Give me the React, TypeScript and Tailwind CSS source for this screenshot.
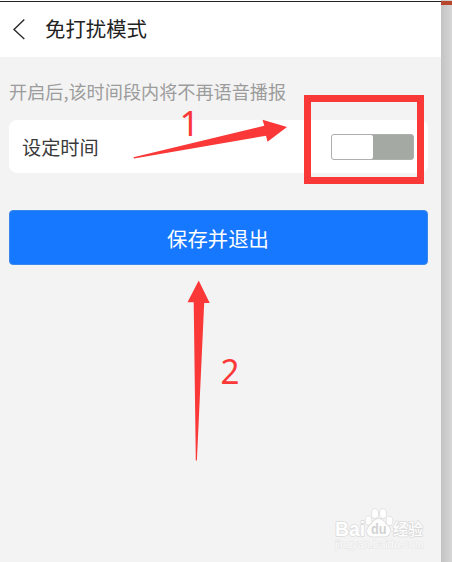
import { useState } from 'react';

const Header = () => (
    <header className="flex h-[55px] items-center bg-white pb-[1px] pl-[12px]">
        <svg width="14" height="22" viewBox="0 0 14 22" fill="none" stroke="#2a2a2a" strokeWidth="1.4">
            <path d="M12.3 1.5 L2 11.5 L12.3 21" />
        </svg>
        <h1 className="-mt-[2px] ml-[19px] text-[20.4px] leading-[28px] text-[#222]">免打扰模式</h1>
    </header>
);

type SwitchProps = {
    on: boolean;
    onToggle: () => void;
};

const Switch = ({ on, onToggle }: SwitchProps) => (
    <button
        type="button"
        role="switch"
        aria-checked={on}
        onClick={onToggle}
        className={`mt-[1px] flex h-[26px] w-[83px] rounded-[3px] border border-[#adb0ac] bg-[#a4aaa3] ${on ? 'justify-end' : 'justify-start'}`}
    >
        <span className="h-full w-[41px] rounded-[2px] bg-white"></span>
    </button>
);

// red marks drawn over the page
const Annotations = () => (
    <svg
        className="pointer-events-none absolute top-0 left-0"
        width="452"
        height="562"
        viewBox="0 0 452 562"
        fill="#fb3838"
        fontFamily="'Noto Sans', 'Open Sans', sans-serif"
    >
        <rect x="307.5" y="98.5" width="113" height="82" fill="none" stroke="#fb3838" strokeWidth="7" />
        <path d="M133.5 157.2 L264.3 125.8 L262.5 119.8 L287 127 L267.5 141.7 L266 135.7 L134 158.4 Z" />
        <path d="M198.7 280.5 L209.7 303 L204.2 303 L196.9 460.5 L195.8 460.5 L193.7 302.3 L187.5 302.3 Z" />
        <text x="179.5" y="136" fontSize="35">1</text>
        <text x="220.5" y="383.5" fontSize="35" textLength="19" lengthAdjust="spacingAndGlyphs">2</text>
    </svg>
);

const Watermark = () => (
    <svg
        className="pointer-events-none absolute top-[504px] left-[332px]"
        width="98"
        height="50"
        viewBox="0 0 98 50"
        fill="#fefefe"
        stroke="#dadada"
        strokeWidth="1.5"
        strokeLinejoin="round"
        paintOrder="stroke"
        fontFamily="'Liberation Sans', 'Noto Sans CJK SC', sans-serif"
    >
        <text x="3" y="32" fontSize="20" fontWeight="700" textLength="30" lengthAdjust="spacingAndGlyphs">Bai</text>
        <ellipse cx="36.5" cy="16.5" rx="3" ry="4.2" />
        <ellipse cx="43" cy="9.5" rx="3.2" ry="4.6" />
        <ellipse cx="51" cy="9.5" rx="3.2" ry="4.6" />
        <ellipse cx="57.5" cy="17" rx="3" ry="4.2" />
        <path d="M46.5 15 C51 15 52.5 19 55.5 21.5 C60 25 58.5 32.5 52.5 32.5 L40.5 32.5 C34 32.5 33.5 25 38 21.5 C40.5 19 42 15 46.5 15 Z" />
        <text x="39" y="30" fontSize="14" fontWeight="700" fill="#d2d2d2" stroke="none" textLength="15.5" lengthAdjust="spacingAndGlyphs">du</text>
        <text x="61" y="31" fontSize="15.5" fontWeight="500" textLength="30" lengthAdjust="spacingAndGlyphs">经验</text>
        <text x="3" y="44" fontSize="10.5" fill="#fcfcfc" stroke="#e4e4e4" strokeWidth="1" textLength="89" lengthAdjust="spacingAndGlyphs">jingyan.baidu.com</text>
    </svg>
);

const App = () => {
    const [enabled, setEnabled] = useState(false);

    return (
        <div className="relative flex h-[562px] w-[452px] overflow-hidden bg-[#f3f3f3] font-['Noto_Sans_CJK_SC',sans-serif]">
            <main className="w-[441px] shrink-0">
                <div className="h-[2px] border-b border-[#222] bg-white"></div>
                <Header />
                <div className="pr-[13px] pl-[9px]">
                    <p className="pt-[20px] text-[18.15px] leading-[28px] whitespace-nowrap text-[#9c9c9c]">
                        开启后,该时间段内将不再语音播报
                    </p>
                    <section className="mt-[15px] flex h-[53px] items-center justify-between rounded-[8px] bg-white pr-[14px] pl-[14px]">
                        <span className="-ml-px pt-px text-[19.2px] leading-[28px] text-[#3a3a3a]">设定时间</span>
                        <Switch on={enabled} onToggle={() => setEnabled(!enabled)} />
                    </section>
                    <button
                        type="button"
                        className="mt-[37px] h-[55px] w-full rounded-[4px] border border-[#3b87ec] bg-[#1677ff] pt-[1px] pr-[1px] text-[20.4px] text-white"
                    >
                        保存并退出
                    </button>
                </div>
            </main>
            <aside className="flex-1 bg-linear-to-r from-[#c3c3c3] to-[#d6d6d6] pt-[1px]">
                <div className="h-[4px] bg-[#b7472a]"></div>
            </aside>
            <Annotations />
            <Watermark />
        </div>
    );
};

export default App;
